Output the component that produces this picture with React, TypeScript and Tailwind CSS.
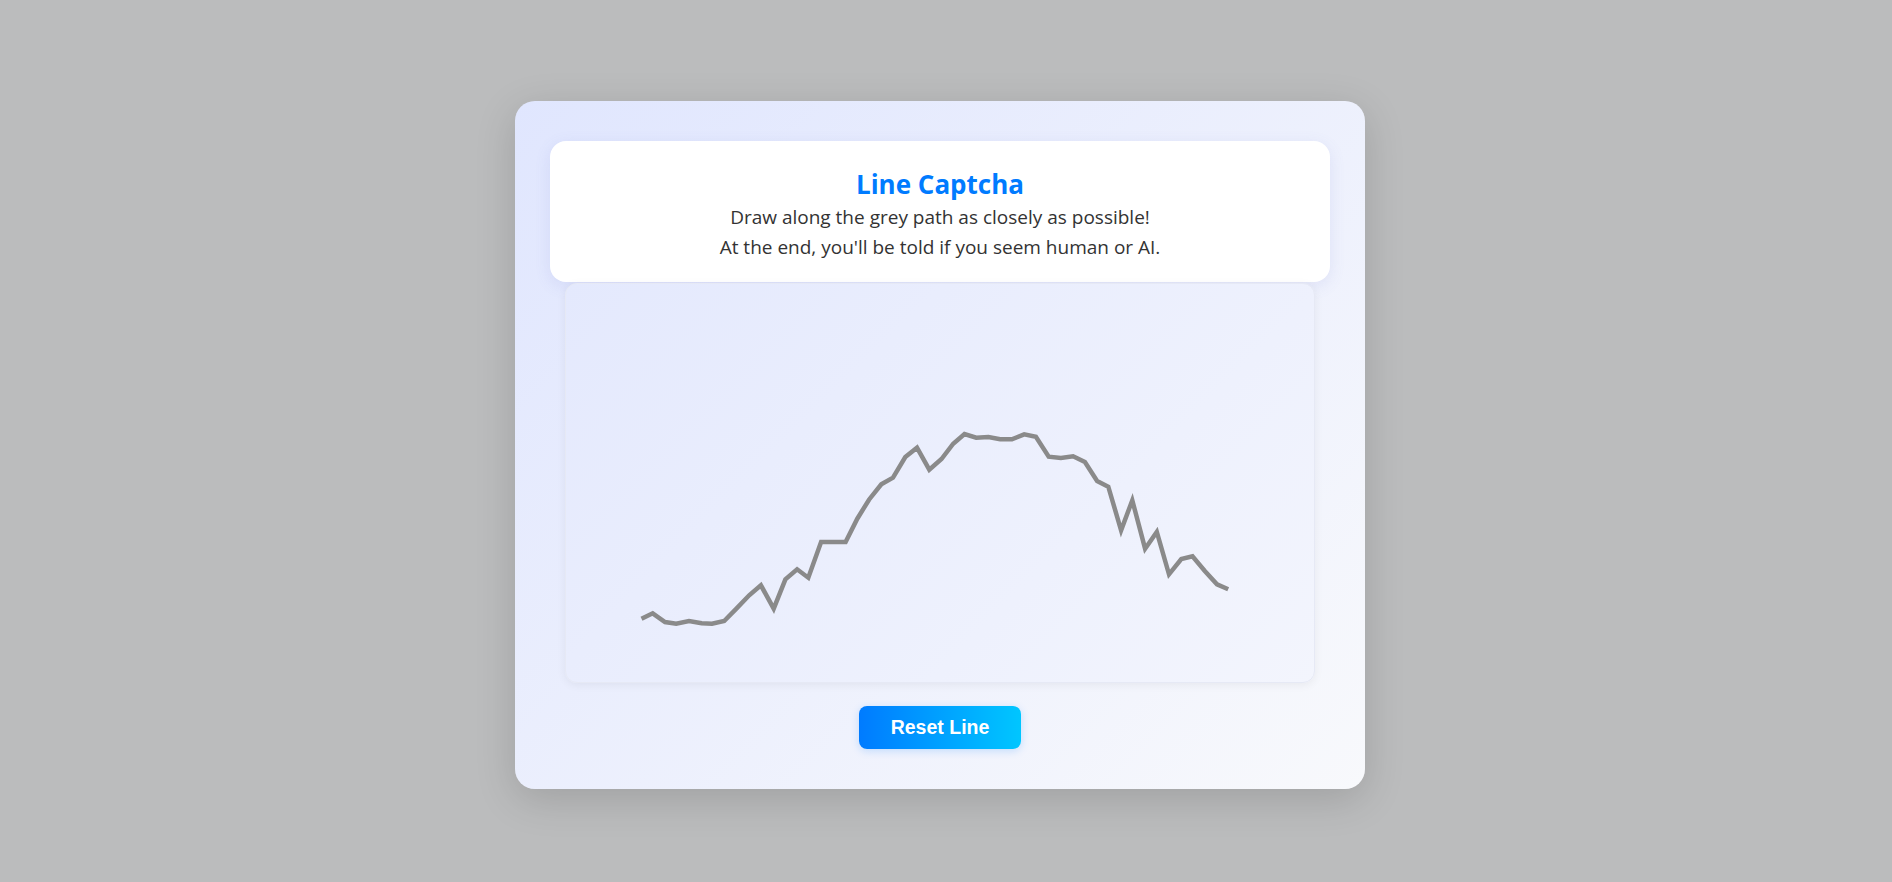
import React from "react";

const pts: [number, number][] = [
  [75.5, 334.7], [86.7, 329.3], [99, 338], [110.2, 339.7], [123, 337], [135.7, 339.3], [146, 339.7],
  [158.2, 337], [170.4, 324.7], [183.2, 311.3], [194.9, 301.3], [207.7, 324.7], [219.4, 295.3],
  [231.1, 285.3], [242.3, 293.7], [255.1, 258], [279.6, 258], [291.3, 234.7], [303, 215.7],
  [315.3, 200.3], [327, 193.7], [339.3, 173], [351, 163.7], [363.3, 185.7], [375.5, 175],
  [387.2, 159.7], [398.5, 150], [410.2, 153.7], [422.4, 153], [434.2, 155.3], [445.9, 155.3],
  [458.2, 150.3], [469.9, 152.7], [482.7, 172.7], [494.9, 174], [507.1, 172.3], [518.9, 178],
  [531.1, 197], [542.3, 202.7], [555.1, 246.3], [566.3, 216.3], [579.1, 264.7], [590.8, 248],
  [603, 290.3], [615.3, 275], [626.5, 272.3], [638.8, 287], [651, 300.3], [662.2, 305.3],
];

export default function App() {
  return (
    <div className="min-h-screen w-full bg-[#bbbcbd] flex items-center justify-center pt-[8px] pr-[12px]" style={{ fontFamily: '"Open Sans", "Noto Sans", sans-serif' }}>
      <div className="w-[850px] h-[688px] rounded-[20px] bg-[linear-gradient(135deg,#e0e6fe_0%,#f8f9fc_100%)] shadow-[0_10px_40px_rgba(0,0,0,0.15)] px-[35px] pt-[40px] pb-[40px] flex flex-col items-center">
        <div className="w-[780px] h-[141px] bg-white rounded-[16px] shadow-[0_4px_16px_rgba(100,110,200,0.12)] flex flex-col items-center pt-[25.5px]">
          <h1 className="text-[26px] leading-[34px] font-bold text-[#007bff]">Line Captcha</h1>
          <p className="text-[19px] leading-[29.5px] text-[#333] mt-[2.5px]">Draw along the grey path as closely as possible!</p>
          <p className="text-[19px] leading-[29.5px] text-[#333]">At the end, you'll be told if you seem human or AI.</p>
        </div>
        <div className="w-[750px] h-[400px] mt-[1px] rounded-[12px] bg-[linear-gradient(135deg,#e4e9fd_0%,#f3f5fd_100%)] shadow-[0_2px_10px_rgba(0,0,0,0.06)] border border-[#e6e9f5]">
          <svg width="750" height="400" viewBox="0 0 750 400" className="block">
            <polyline
              points={pts.map((p) => p.join(",")).join(" ")}
              fill="none"
              stroke="#8a8a8a"
              strokeWidth={4.5}
              strokeLinejoin="miter"
              strokeLinecap="butt"
            />
          </svg>
        </div>
        <button className="mt-[23px] w-[162px] h-[43px] rounded-[8px] bg-[linear-gradient(90deg,#007bff_0%,#00c6ff_100%)] text-white text-[19.5px] font-bold shadow-[0_2px_8px_rgba(0,123,255,0.2)]" style={{ fontFamily: '"Liberation Sans", Arial, sans-serif' }}>
          Reset Line
        </button>
      </div>
    </div>
  );
}
